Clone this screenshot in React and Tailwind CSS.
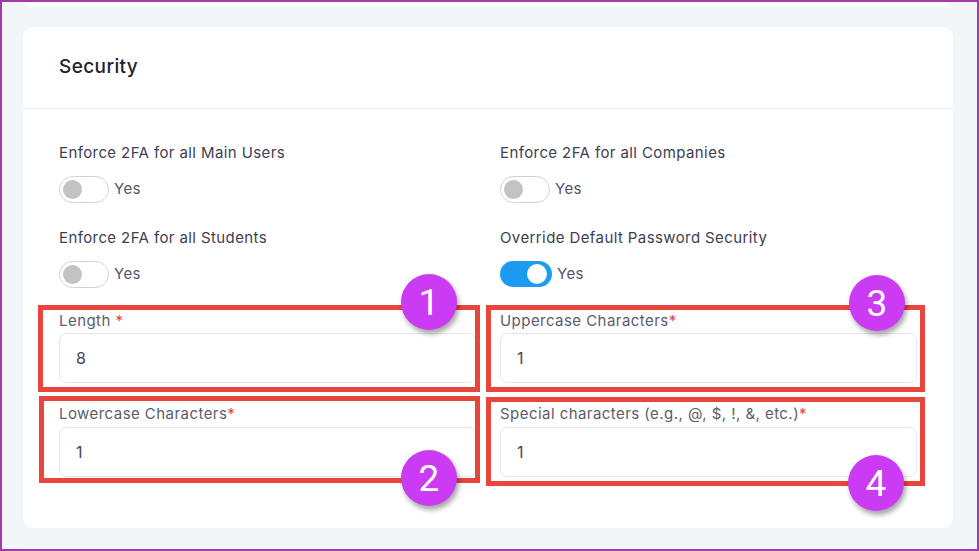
import React from "react";

const font = { fontFamily: "Inter, 'Noto Sans', sans-serif" };

const Toggle = ({ on }) => (
  <div className="flex items-center gap-[5px]">
    {on ? (
      <div className="w-[52px] h-[26px] rounded-full bg-[#1b9cf2] flex items-center justify-end pr-[5px]">
        <div className="w-[20px] h-[20px] rounded-full bg-white" />
      </div>
    ) : (
      <div className="w-[50px] h-[27px] rounded-full border border-[#d2d2d2] bg-white flex items-center pl-[3px]">
        <div className="w-[19px] h-[19px] rounded-full bg-[#c3c3c3]" />
      </div>
    )}
    <span className="text-[15px] tracking-[0.4px] text-[#55556a]">Yes</span>
  </div>
);

const ToggleField = ({ label, on }) => (
  <div>
    <div className="text-[15px] tracking-[0.4px] leading-5 text-[#404052]">{label}</div>
    <div className="mt-[13px]">
      <Toggle on={on} />
    </div>
  </div>
);

const Marker = ({ n, className }) => (
  <div
    className={`absolute z-20 w-[56px] h-[56px] rounded-full bg-[#cb3bf3] shadow-[2px_4px_5px_rgba(0,0,0,0.35)] flex items-center justify-center text-white text-[37px] leading-none ${className}`}
    style={{ fontFamily: "Roboto, 'Liberation Sans', sans-serif" }}
  >
    {n}
  </div>
);

const InputField = ({ label, value, gap, box, marker }) => (
  <div className="relative">
    <div className="text-[15px] tracking-[0.45px] leading-5 text-[#5c5c6e]">
      {label}
      <span className="text-[#e8414b]">*</span>
    </div>
    <div
      className={`${gap} h-[50px] rounded-[7px] border border-[#e5e7ee] bg-white flex items-center pl-[16px] text-[16px] text-[#45455a]`}
    >
      {value}
    </div>
    <div className={`absolute z-10 border-[5px] border-[#e8453d] pointer-events-none ${box}`} />
    {marker}
  </div>
);

export default function App() {
  return (
    <div
      className="w-[979px] h-[551px] overflow-hidden border-2 border-[#a23ba5] bg-[#f3f6f9] pl-[21px] pr-[24px]"
      style={font}
    >
      <div className="h-[5px] bg-white rounded-b-[10px] mb-[20px] mr-[3px] ml-[2px]" />
      <div className="h-[501px] bg-white rounded-[10px]">
        <div className="h-[82px] flex items-center px-9 border-b border-[#eef0f4]">
          <h2 className="text-[19px] tracking-[0.4px] font-medium text-[#22222f]">Security</h2>
        </div>
        <div className="px-9 pt-[34px]">
          <div className="grid grid-cols-2 gap-x-6">
            <ToggleField label="Enforce 2FA for all Main Users" />
            <ToggleField label="Enforce 2FA for all Companies" />
          </div>
          <div className="grid grid-cols-2 gap-x-6 mt-[25px]">
            <ToggleField label="Enforce 2FA for all Students" />
            <ToggleField label="Override Default Password Security" on />
          </div>
          <div className="grid grid-cols-2 gap-x-6 mt-[23px]">
            <InputField
              label="Length "
              value="8"
              gap="mt-[2px]"
              box="-left-[21px] -right-[4px] -top-[6px] -bottom-[9px]"
              marker={<Marker n="1" className="right-[19px] -top-[37px]" />}
            />
            <InputField
              label="Uppercase Characters"
              value="1"
              gap="mt-[2px]"
              box="-left-[14px] -right-[8px] -top-[6px] -bottom-[9px]"
              marker={<Marker n="3" className="right-[12px] -top-[36px]" />}
            />
          </div>
          <div className="grid grid-cols-2 gap-x-6 mt-[21px]">
            <InputField
              label="Lowercase Characters"
              value="1"
              gap="mt-[3px]"
              box="-left-[20px] -right-[4px] -top-[8px] -bottom-[6px]"
              marker={<Marker n="2" className="right-[19px] -bottom-[29px]" />}
            />
            <InputField
              label="Special characters (e.g., @, $, !, &, etc.)"
              value="1"
              gap="mt-[3px]"
              box="-left-[14px] -right-[8px] -top-[7px] -bottom-[9px]"
              marker={<Marker n="4" className="right-[13px] -bottom-[34px]" />}
            />
          </div>
        </div>
      </div>
    </div>
  );
}
